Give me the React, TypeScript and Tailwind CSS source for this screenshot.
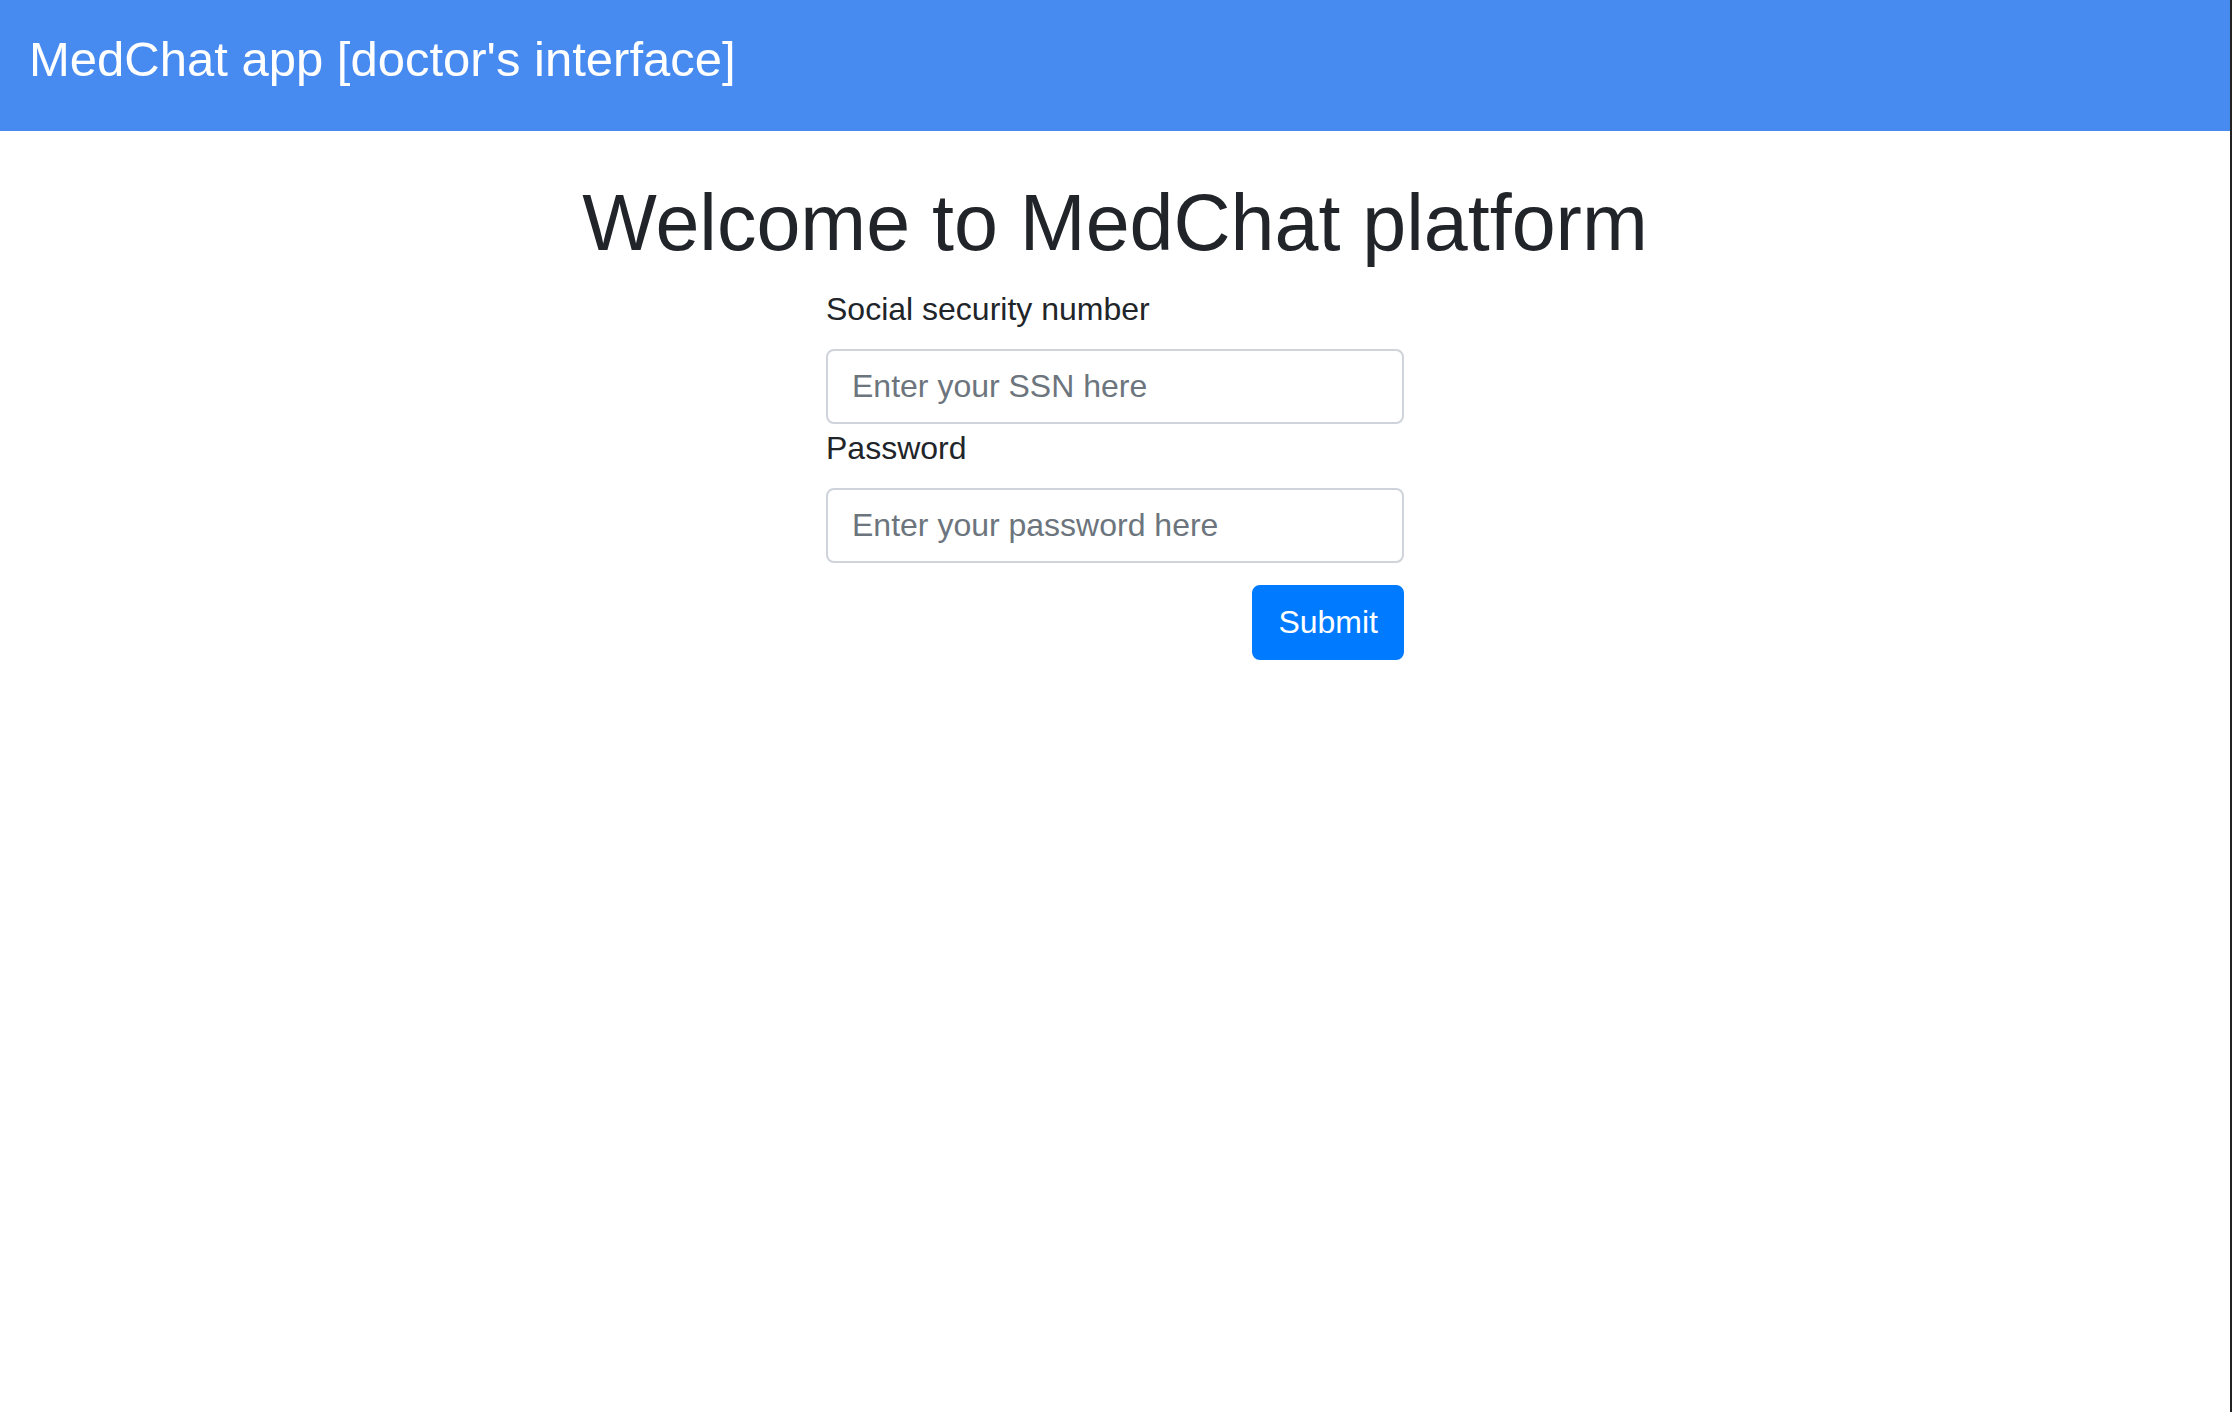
import React from "react";

const App = () => {
  return (
    <div
      className="flex min-h-screen w-full bg-white"
      style={{ fontFamily: '"Liberation Sans", Arial, sans-serif' }}
    >
      <div className="flex-1">
        {/* navbar */}
        <div className="h-[131px] bg-[#478bf1] pl-[29px] pt-[35px]">
          <span className="text-[49px] leading-[49px] text-white">
            MedChat app [doctor's interface]
          </span>
        </div>

        <h1 className="mt-[45px] mb-[14px] text-center text-[79px] leading-[1.2] text-[#212529]">
          Welcome to MedChat platform
        </h1>

        <form className="mx-auto flex w-[578px] flex-col">
          <label className="mb-4 text-[32px] leading-[48px] text-[#212529]">
            Social security number
          </label>
          <input
            type="text"
            placeholder="Enter your SSN here"
            className="h-[75px] rounded-lg border-2 border-[#ced4da] px-6 text-[32px] text-[#495057] outline-none placeholder:text-[#6c757d]"
          />
          <label className="mb-4 text-[32px] leading-[48px] text-[#212529]">
            Password
          </label>
          <input
            type="password"
            placeholder="Enter your password here"
            className="h-[75px] rounded-lg border-2 border-[#ced4da] px-6 text-[32px] text-[#495057] outline-none placeholder:text-[#6c757d]"
          />
          <div className="mt-[22px] flex justify-end">
            <button
              type="button"
              className="h-[75px] rounded-lg border-2 border-[#007bff] bg-[#007bff] px-6 text-[32px] text-white"
            >
              Submit
            </button>
          </div>
        </form>
      </div>
      <div className="w-[2px] bg-[#222]" />
    </div>
  );
};

export default App;
